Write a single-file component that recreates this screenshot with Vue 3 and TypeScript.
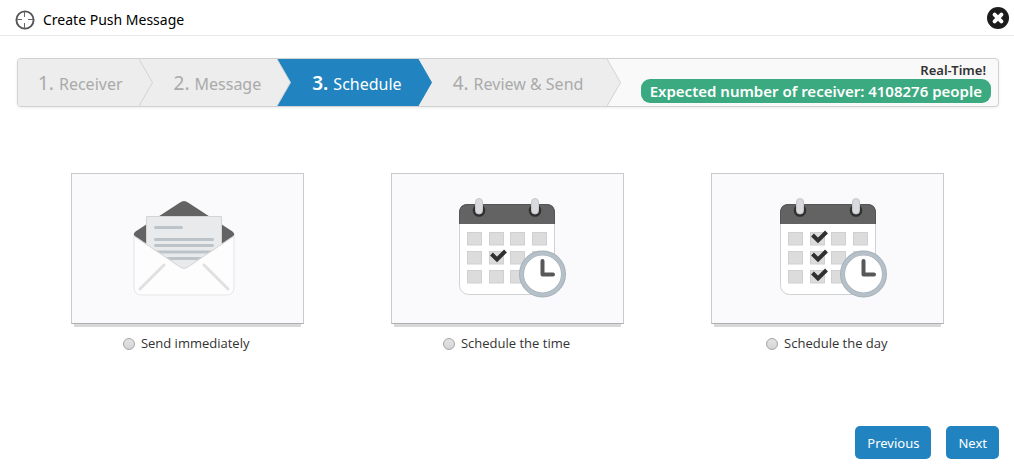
<script setup lang="ts">
import { ref } from 'vue'

interface Step {
  number: number
  label: string
}

interface Option {
  id: string
  label: string
  checks: number[]
}

const steps: Step[] = [
  { number: 1, label: 'Receiver' },
  { number: 2, label: 'Message' },
  { number: 3, label: 'Schedule' },
  { number: 4, label: 'Review & Send' },
]
const current = 3

const options: Option[] = [
  { id: 'now', label: 'Send immediately', checks: [] },
  { id: 'time', label: 'Schedule the time', checks: [1] },
  { id: 'day', label: 'Schedule the day', checks: [0, 1, 2] },
]
const selected = ref('')
const receivers = 4108276

const cellColumns = [75, 97, 118, 140]
const cellRows = [58, 77, 96]
</script>

<template>
  <div class="dialog">
    <header class="top">
      <svg class="target" viewBox="0 0 20 20" aria-hidden="true">
        <circle cx="10" cy="10" r="8.6" fill="#fff" stroke="#555" stroke-width="1.9" />
        <path d="M9.500 2v5M9.500 13v5M2 9.500h5M13 9.500h5" stroke="#666" stroke-width="1" />
      </svg>
      <h1>Create Push Message</h1>
      <button class="close" type="button" aria-label="Close">
        <svg viewBox="0 0 22 22" aria-hidden="true">
          <circle cx="11" cy="11" r="11" fill="#1d1d1d" />
          <path d="M7.6 7.6l6.8 6.8M14.4 7.6l-6.8 6.8" stroke="#fff" stroke-width="4" stroke-linecap="round" />
        </svg>
      </button>
    </header>

    <nav class="wizard" aria-label="Steps">
      <ol class="steps">
        <li v-for="s in steps" :key="s.number" class="step" :class="{ active: s.number === current }">
          <span class="num">{{ s.number }}.</span>
          <span class="name">{{ s.label }}</span>
          <svg class="chevron" viewBox="0 0 14 47" preserveAspectRatio="none" aria-hidden="true">
            <path class="fill" d="M0 0L13.5 23.5L0 47z" />
            <path class="edge" d="M0 0L13.5 23.5L0 47" />
          </svg>
        </li>
      </ol>
      <div class="status">
        <span class="live">Real-Time!</span>
        <span class="badge">Expected number of receiver: {{ receivers }} people</span>
      </div>
    </nav>

    <main class="options">
      <div v-for="o in options" :key="o.id" class="option">
        <label class="card" :for="o.id">
          <svg v-if="o.id === 'now'" class="art" viewBox="0 0 231 149" aria-hidden="true">
            <path d="M108 28.500Q112 25.500 116 28.500L160.500 57.500Q164 60.500 160.500 63.500L116 93H108L63.500 63.500Q60 60.500 63.500 57.500Z" fill="#636363" />
            <path d="M74.500 42.500H149.500V80L112 100L74.500 80Z" fill="#e9eaec" stroke="#d3d4d6" />
            <path d="M83.500 53.500H109.500M83.500 65.500H140.500M83.500 71.500H140.500M83.500 78H140.500M83.500 84.500H140.500" stroke="#bcc3c9" stroke-width="3" stroke-linecap="round" />
            <path d="M62 62L107.500 92.500Q112 96 116.500 92.500L162 62V113Q162 121 154 121H70Q62 121 62 113Z" fill="#fdfdfd" stroke="#e5e5e7" />
            <path d="M62 62L107.500 92.500Q112 96 116.500 92.500L162 62" fill="none" stroke="#d7d8da" />
            <path d="M68 115L92 91M156 115L132 91" stroke="#e0e1e3" stroke-width="3" stroke-linecap="round" />
          </svg>
          <svg v-else class="art" viewBox="0 0 231 149" aria-hidden="true">
            <g :transform="o.id === 'day' ? 'translate(1 0)' : undefined">
              <rect x="67.500" y="30.500" width="95" height="90" rx="9" fill="#fff" stroke="#d0d1d3" />
              <path d="M67 50V39Q67 30 76 30H154Q163 30 163 39V50Z" fill="#636363" />
              <path d="M67.500 50V39Q67.500 30.500 76 30.500H154Q162.500 30.500 162.500 39V50" fill="none" stroke="#555" />
              <g v-for="x in [87, 143]" :key="x">
                <circle :cx="x" cy="36.500" r="6.300" fill="#303030" />
                <rect :x="x - 3.5" y="24.500" width="7" height="15.500" rx="3.500" fill="#d9dadd" stroke="#c6c7ca" />
              </g>
              <template v-for="y in cellRows" :key="y">
                <rect v-for="x in cellColumns" :key="x" :x="x + 0.5" :y="y + 0.5" width="14" height="12.500" fill="#dcdcdc" stroke="#d0d0d0" />
              </template>
              <path v-for="c in o.checks" :key="c" :d="`M99.500 ${61 + c * 19}l5.500 5.500l8.500 -8.500`" fill="none" stroke="#303030" stroke-width="4" />
              <circle cx="150.500" cy="100" r="21" fill="#fff" stroke="#a5b0b9" stroke-width="5" />
              <circle cx="150.500" cy="100" r="20.800" fill="none" stroke="#b6c0c8" stroke-width="3.400" />
              <path d="M150.500 87V100.500H161" fill="none" stroke="#585858" stroke-width="4" stroke-linecap="round" stroke-linejoin="round" />
            </g>
          </svg>
        </label>
        <div class="choice">
          <input :id="o.id" v-model="selected" type="radio" name="schedule" :value="o.id" />
          <label :for="o.id">{{ o.label }}</label>
        </div>
      </div>
    </main>

    <footer class="actions">
      <button type="button">Previous</button>
      <button type="button">Next</button>
    </footer>
  </div>
</template>

<style>
body {
  margin: 0;
  background: #fff;
}
</style>

<style scoped>
.dialog {
  min-height: 100vh;
  box-sizing: border-box;
  padding-bottom: 9px;
  display: flex;
  flex-direction: column;
  font-family: "Noto Sans", "Open Sans", sans-serif;
  color: #333;
}

.top {
  display: flex;
  align-items: center;
  height: 35px;
  padding: 0 5px 0 15px;
  border-bottom: 1px solid #e8e8e8;
}

.target {
  width: 20px;
  height: 20px;
  margin-top: 5px;
}

h1 {
  flex: 1;
  margin: 4px 0 0 8px;
  font-size: 14px;
  line-height: 20px;
  font-weight: 400;
  color: #000;
}

.close {
  width: 22px;
  height: 22px;
  padding: 0;
  border: 0;
  background: none;
}

.close svg {
  display: block;
}

.wizard {
  display: flex;
  justify-content: space-between;
  margin: 22px 15px 0 17px;
  border: 1px solid #d0d1d2;
  border-radius: 4px;
  background: #f9f9f9;
  box-shadow: 0 1px 3px rgba(0, 0, 0, 0.08);
}

.steps {
  display: flex;
  margin: 0;
  padding: 0;
  list-style: none;
}

.step {
  position: relative;
  display: flex;
  align-items: baseline;
  gap: 5px;
  padding: 4px 16px 0 35px;
  background: #ededed;
  color: #aaa;
  line-height: 40px;
  white-space: nowrap;
}

.step:first-child {
  padding-left: 20px;
  border-radius: 3px 0 0 3px;
}

.step:last-child {
  padding-right: 24px;
}

.num {
  font-size: 19px;
}

.name {
  font-size: 16px;
}

.active {
  background: #2183bf;
  color: #fff;
}

.active .num {
  font-weight: 600;
}

.chevron {
  position: absolute;
  top: 0;
  right: -14px;
  z-index: 1;
  width: 14px;
  height: 100%;
}

.fill {
  fill: #ededed;
}

.edge {
  fill: none;
  stroke: #d2d3d4;
}

.active .fill {
  fill: #2183bf;
}

.active .edge {
  stroke: #2183bf;
}

.status {
  display: flex;
  flex-direction: column;
  align-items: flex-end;
  padding: 3px 7px 3px 0;
  white-space: nowrap;
}

.live {
  margin-right: 5px;
  font-size: 13px;
  line-height: 17px;
  font-weight: 600;
}

.badge {
  padding: 0 9px;
  border-radius: 9px;
  background: #3caa80;
  color: #fff;
  font-size: 15px;
  line-height: 24px;
  font-weight: 600;
}

.options {
  display: grid;
  grid-template-columns: repeat(3, 1fr);
  padding: 66px 26px 0 27px;
}

.option {
  display: flex;
  flex-direction: column;
  align-items: center;
}

.card {
  border: 1px solid #cacacc;
  border-bottom-color: #b0b0b2;
  background: #fafafc;
  box-shadow: 0 6px 0 -3px #d8d8d9;
}

.art {
  display: block;
  width: 231px;
  height: 149px;
}

.choice {
  display: flex;
  align-items: center;
  gap: 6px;
  margin-top: 10px;
  padding-right: 2px;
  font-family: "Open Sans", "Noto Sans", sans-serif;
  font-size: 13px;
  line-height: 18px;
}

.choice input {
  appearance: none;
  width: 12px;
  height: 12px;
  margin: 2px 0 0;
  border: 1px solid #a5a5a5;
  border-radius: 50%;
  background: linear-gradient(#e4e4e4, #d4d4d4);
}

.choice input:checked {
  background: radial-gradient(circle, #333 0 3px, #ddd 4px);
}

.actions {
  display: flex;
  justify-content: flex-end;
  gap: 15px;
  margin-top: auto;
  padding-right: 15px;
}

.actions button {
  padding: 2px 12px 0;
  border: 0;
  border-radius: 5px;
  background: #2183bf;
  color: #fff;
  font-family: inherit;
  font-size: 13px;
  line-height: 31px;
}
</style>
